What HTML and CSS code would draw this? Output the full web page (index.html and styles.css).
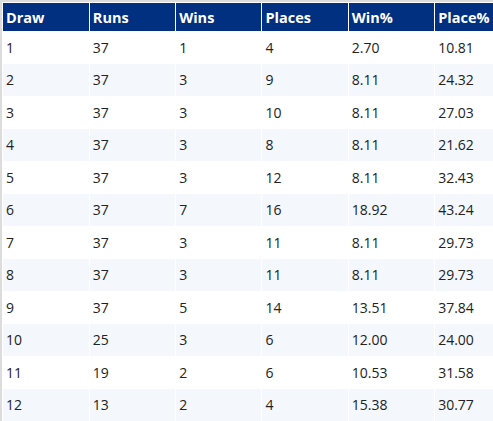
FILE: index.html
```html
<!DOCTYPE html>
<html>
<head>
<meta charset="utf-8">
<link rel="stylesheet" href="styles.css">
</head>
<body>
<div class="frame">
<table class="stats">
<thead>
<tr><th>Draw</th><th>Runs</th><th>Wins</th><th>Places</th><th>Win%</th><th>Place%</th></tr>
</thead>
<tbody>
<tr><td>1</td><td>37</td><td>1</td><td>4</td><td>2.70</td><td>10.81</td></tr>
<tr><td>2</td><td>37</td><td>3</td><td>9</td><td>8.11</td><td>24.32</td></tr>
<tr><td>3</td><td>37</td><td>3</td><td>10</td><td>8.11</td><td>27.03</td></tr>
<tr><td>4</td><td>37</td><td>3</td><td>8</td><td>8.11</td><td>21.62</td></tr>
<tr><td>5</td><td>37</td><td>3</td><td>12</td><td>8.11</td><td>32.43</td></tr>
<tr><td>6</td><td>37</td><td>7</td><td>16</td><td>18.92</td><td>43.24</td></tr>
<tr><td>7</td><td>37</td><td>3</td><td>11</td><td>8.11</td><td>29.73</td></tr>
<tr><td>8</td><td>37</td><td>3</td><td>11</td><td>8.11</td><td>29.73</td></tr>
<tr><td>9</td><td>37</td><td>5</td><td>14</td><td>13.51</td><td>37.84</td></tr>
<tr><td>10</td><td>25</td><td>3</td><td>6</td><td>12.00</td><td>24.00</td></tr>
<tr><td>11</td><td>19</td><td>2</td><td>6</td><td>10.53</td><td>31.58</td></tr>
<tr><td>12</td><td>13</td><td>2</td><td>4</td><td>15.38</td><td>30.77</td></tr>
</tbody>
</table>
</div>
</body>
</html>
```
FILE: styles.css
```css
html, body {
  margin: 0;
  padding: 0;
  background: #fff;
}
.frame {
  box-sizing: border-box;
  width: 493px;
  height: 421px;
  overflow: hidden;
  border-top: 2px solid #dcdcdc;
  border-left: 2px solid #dcdcdc;
  padding: 1px 0 0 1px;
}
.stats {
  border-collapse: collapse;
  table-layout: fixed;
  width: 518px;
  font-family: "Open Sans", "DejaVu Sans", sans-serif;
  font-size: 14px;
  color: #222;
}
.stats th, .stats td {
  text-align: left;
  padding: 0 0 0 3px;
  border-left: 1px solid #fff;
  white-space: nowrap;
}
.stats th:first-child, .stats td:first-child {
  border-left: 0;
}
.stats th {
  background: #00307f;
  color: #fff;
  font-weight: 700;
  font-size: 14.5px;
  height: 28px;
}
.stats td {
  height: 32.5px;
}
.stats tbody tr:nth-child(even) td {
  background: #f4f7fc;
}
```
